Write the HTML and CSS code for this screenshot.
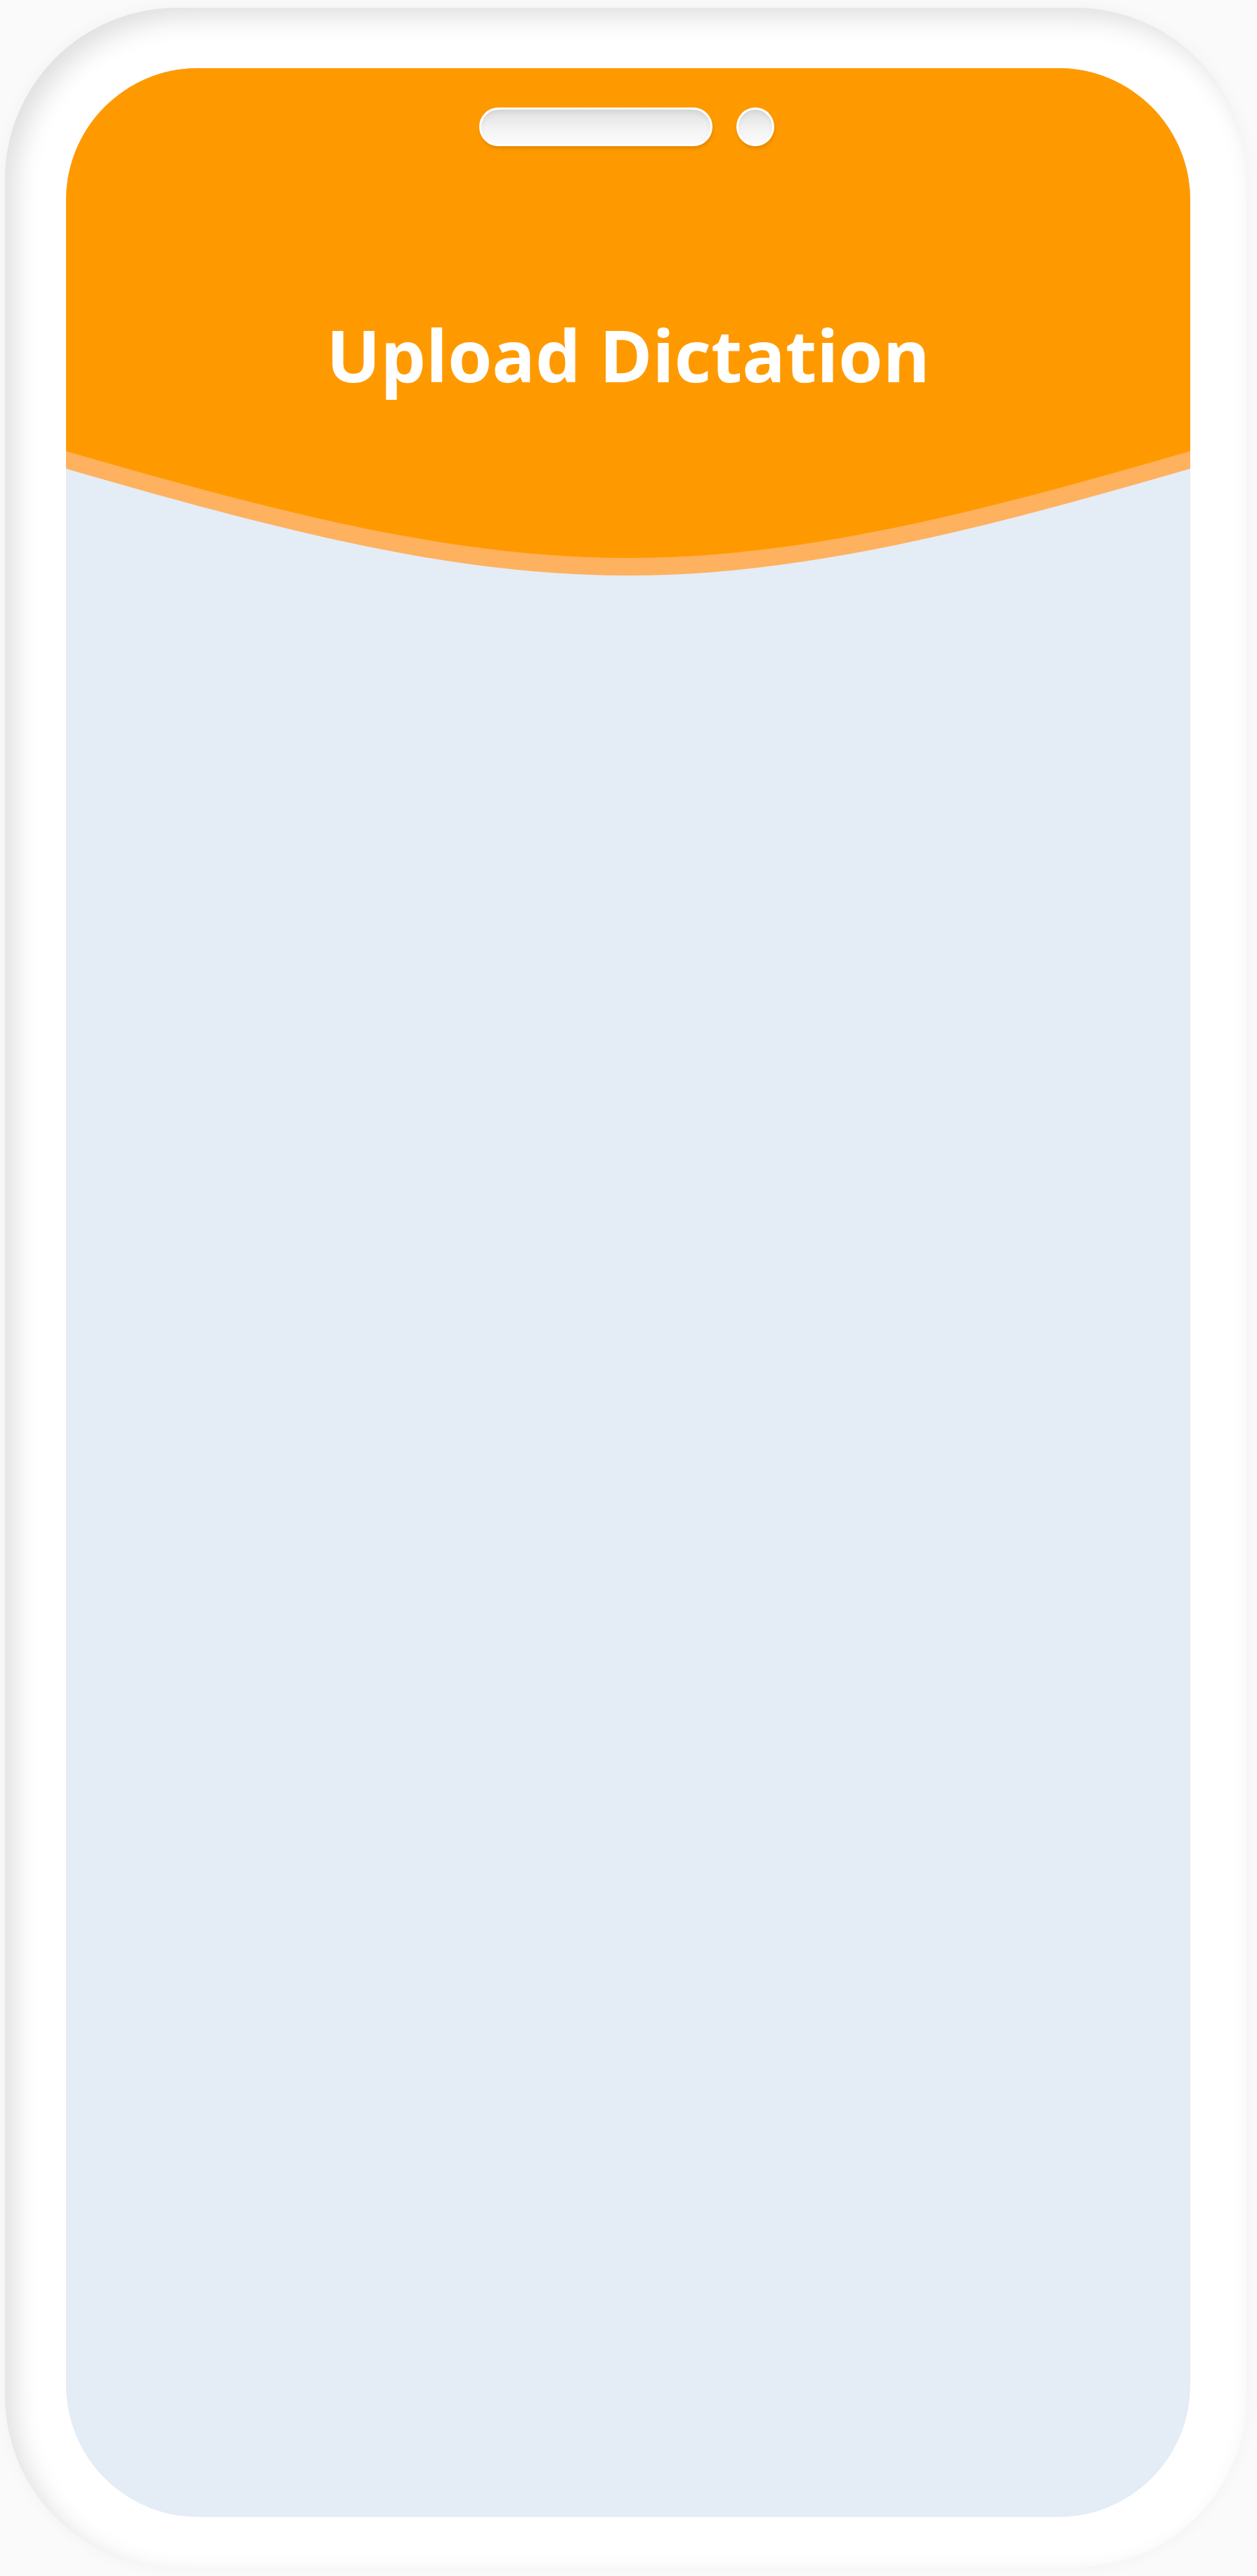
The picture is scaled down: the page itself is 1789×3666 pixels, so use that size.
FILE: index.html
```html
<!DOCTYPE html>
<html lang="en">
<head>
<meta charset="utf-8">
<title>Upload Dictation</title>
<link rel="stylesheet" href="styles.css">
</head>
<body>
<div class="device">
  <div class="screen">
    <header class="hero">
      <svg class="hero-bg" viewBox="0 0 1600 740" preserveAspectRatio="none" aria-hidden="true">
        <path class="band" d="M0,0 H1600 V570 C1300,657 1050,722 800,722 C550,722 300,657 0,570 Z"/>
        <path class="fill" d="M0,0 H1600 V545 C1300,632 1050,697 800,697 C550,697 300,632 0,545 Z"/>
      </svg>
      <div class="notch">
        <span class="speaker"></span>
        <span class="camera"></span>
      </div>
      <h1 class="title">Upload Dictation</h1>
    </header>
  </div>
</div>
</body>
</html>
```

FILE: styles.css
```css
html, body {
  margin: 0;
  padding: 0;
}

body {
  width: 1789px;
  height: 3666px;
  background: #fafafa;
  font-family: "Open Sans", "Noto Sans", sans-serif;
  box-sizing: border-box;
  padding: 11px 14px 12px 7px;
}

.device {
  box-sizing: border-box;
  width: 1768px;
  height: 3643px;
  background: #ffffff;
  border-radius: 245px;
  padding: 86px 81px 72px 87px;
  box-shadow:
    inset 14px 14px 36px rgba(0, 0, 0, 0.13),
    0 0 24px rgba(0, 0, 0, 0.035);
}

.screen {
  width: 1600px;
  height: 3485px;
  border-radius: 188px;
  overflow: hidden;
  background: #e4ecf6;
}

.hero {
  position: relative;
  height: 740px;
  padding-top: 56px;
  box-sizing: border-box;
}

.hero-bg {
  position: absolute;
  left: 0;
  top: 0;
  width: 100%;
  height: 100%;
  z-index: 0;
}

.hero-bg .fill {
  fill: #fe9a00;
}

.hero-bg .band {
  fill: #feb15e;
}

.notch {
  position: relative;
  z-index: 1;
  display: flex;
  justify-content: center;
  gap: 34px;
  margin-left: -4px;
}

.speaker,
.camera {
  box-sizing: border-box;
  height: 55px;
  border: 3px solid #ffffff;
  background: linear-gradient(#e0e0e0, #f3f3f3 55%, #fbfbfb);
  box-shadow:
    1px 4px 4px rgba(150, 80, 0, 0.22),
    inset 0 4px 6px rgba(0, 0, 0, 0.06);
}

.speaker {
  width: 332px;
  border-radius: 28px;
}

.camera {
  width: 54px;
  border-radius: 50%;
}

.title {
  position: relative;
  z-index: 1;
  margin: 246px 0 0;
  text-align: center;
  color: #ffffff;
  font-family: "Open Sans", "Noto Sans", sans-serif;
  font-weight: 700;
  font-size: 102px;
  line-height: 102px;
}
```
